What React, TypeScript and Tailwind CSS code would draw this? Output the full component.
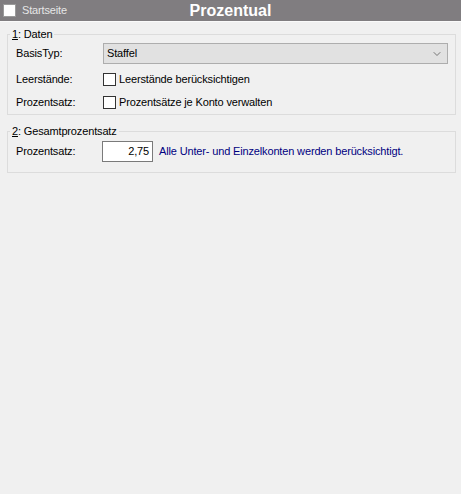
import { ChevronDown } from "lucide-react";

function Row({ label, children }: { label: string; children: React.ReactNode }) {
  return (
    <div className="flex h-[23px] items-center">
      <div className="w-[95px] pl-[8px]">{label}</div>
      {children}
    </div>
  );
}

function Check({ text }: { text: string }) {
  return (
    <label className="flex items-center gap-[3px]">
      <span className="block size-[13px] border border-[#333333] bg-white" />
      <span>{text}</span>
    </label>
  );
}

export default function App() {
  return (
    <div className="h-[494px] w-[461px] bg-[#f0f0f0] text-[11px] tracking-[-0.15px] text-black [font-family:'Liberation_Sans',Arial,sans-serif]">
      <header className="relative flex h-[22px] items-center border-b border-[#fafafa] bg-[#807d80]">
        <div className="flex items-center gap-[6px] pl-[3px]">
          <span className="block size-[13px] border border-[#9a9a9a] bg-white" />
          <span className="text-[#e6e6e6]">Startseite</span>
        </div>
        <h1 className="absolute inset-x-0 text-center text-[16px] font-bold leading-[22px] tracking-normal text-white">
          Prozentual
        </h1>
      </header>

      <div className="px-[7px] pt-[6px]">
        <fieldset className="w-[449px] border border-[#dcdcdc] px-0 pb-0 pt-[2px]">
          <legend className="ml-[2px] px-[2px] leading-[13px]">
            <span className="underline">1</span>: Daten
          </legend>
          <div className="flex h-[21px] items-center">
            <div className="w-[95px] pl-[8px]">BasisTyp:</div>
            <div className="flex h-[21px] w-[345px] items-center justify-between border border-[#adadad] bg-[#e1e1e1] pl-[3px] pr-[4px]">
              <span>Staffel</span>
              <ChevronDown className="size-[12px] text-[#505050]" strokeWidth={1.5} />
            </div>
          </div>
          <div className="mt-[4px]">
            <Row label="Leerstände:">
              <Check text="Leerstände berücksichtigen" />
            </Row>
            <Row label="Prozentsatz:">
              <Check text="Prozentsätze je Konto verwalten" />
            </Row>
          </div>
        </fieldset>

        <fieldset className="mt-[10px] w-[449px] border border-[#dcdcdc] px-0 pb-[10px] pt-[3px]">
          <legend className="ml-[2px] px-[2px] leading-[13px]">
            <span className="underline">2</span>: Gesamtprozentsatz
          </legend>
          <div className="flex h-[21px] items-center">
            <div className="w-[94px] pl-[8px]">Prozentsatz:</div>
            <div className="flex h-[21px] w-[51px] items-center justify-end border border-[#7a7a7a] bg-white pr-[3px]">
              2,75
            </div>
            <span className="ml-[6px] text-[#000080]">
              Alle Unter- und Einzelkonten werden berücksichtigt.
            </span>
          </div>
        </fieldset>
      </div>
    </div>
  );
}
